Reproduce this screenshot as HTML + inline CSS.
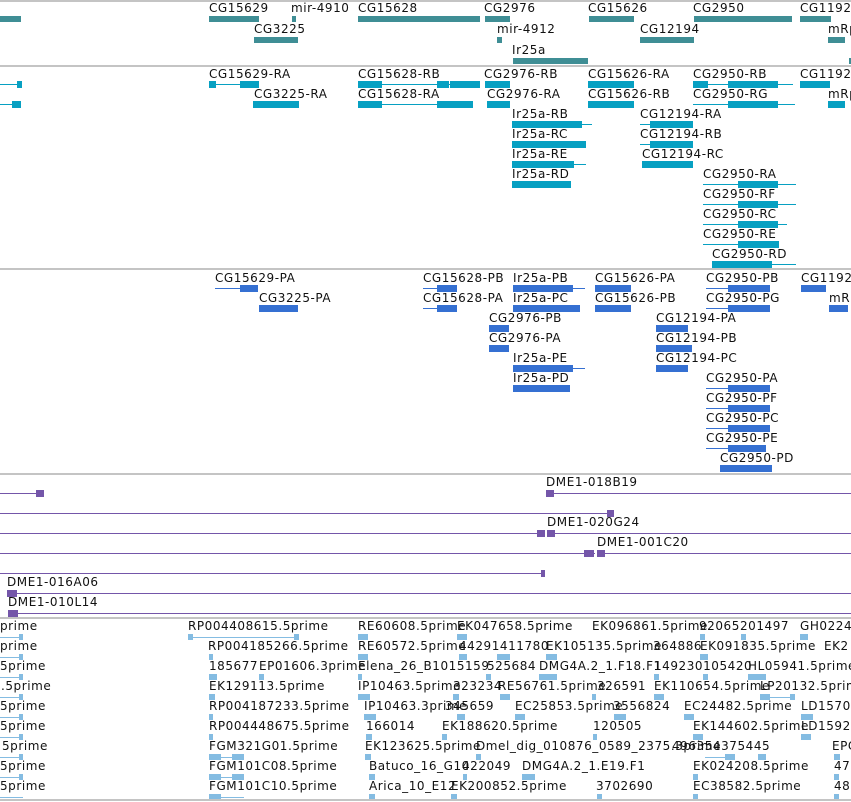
<!DOCTYPE html>
<html><head><meta charset="utf-8"><style>
html,body{margin:0;padding:0;background:#fff;width:851px;height:802px;overflow:hidden;position:relative}
.t{position:absolute;font:12px "DejaVu Sans","Liberation Sans",sans-serif;letter-spacing:0.55px;line-height:14px;white-space:nowrap;color:#111}
.s{position:absolute;left:0;width:851px;height:2px;background:#c4c4c4}
.a,.b,.c,.d,.e{position:absolute}
.a{background:#3f8e95}.b{background:#07a0c2}.c{background:#3570d2}.d{background:#7456a9}.e{background:#84bce2}
</style></head><body>
<div class="s" style="top:0px"></div>
<div class="s" style="top:65px"></div>
<div class="s" style="top:268px"></div>
<div class="s" style="top:473px"></div>
<div class="s" style="top:617px"></div>
<div class="s" style="top:799px"></div>

<!-- Track 1 genes -->
<div class="a" style="left:0;top:16px;width:21px;height:6px"></div>
<div class="t" style="left:209px;top:1px">CG15629</div><div class="a" style="left:209px;top:16px;width:50px;height:6px"></div>
<div class="t" style="left:291px;top:1px">mir-4910</div><div class="a" style="left:292px;top:16px;width:4px;height:6px"></div>
<div class="t" style="left:358px;top:1px">CG15628</div><div class="a" style="left:358px;top:16px;width:122px;height:6px"></div>
<div class="t" style="left:484px;top:1px">CG2976</div><div class="a" style="left:485px;top:16px;width:25px;height:6px"></div>
<div class="t" style="left:588px;top:1px">CG15626</div><div class="a" style="left:589px;top:16px;width:45px;height:6px"></div>
<div class="t" style="left:693px;top:1px">CG2950</div><div class="a" style="left:694px;top:16px;width:98px;height:6px"></div>
<div class="t" style="left:800px;top:1px">CG11927</div><div class="a" style="left:800px;top:16px;width:31px;height:6px"></div>
<div class="t" style="left:254px;top:22px">CG3225</div><div class="a" style="left:254px;top:37px;width:44px;height:6px"></div>
<div class="t" style="left:497px;top:22px">mir-4912</div><div class="a" style="left:497px;top:37px;width:5px;height:6px"></div>
<div class="t" style="left:640px;top:22px">CG12194</div><div class="a" style="left:640px;top:37px;width:54px;height:6px"></div>
<div class="t" style="left:828px;top:22px">mRp</div><div class="a" style="left:828px;top:37px;width:17px;height:6px"></div>
<div class="t" style="left:512px;top:43px">Ir25a</div><div class="a" style="left:513px;top:58px;width:75px;height:6px"></div>
<div class="a" style="left:849px;top:58px;width:2px;height:6px"></div>

<!-- Track 2 transcripts -->
<div class="b" style="left:0;top:84px;width:22px;height:1px"></div><div class="b" style="left:17px;top:81px;width:5px;height:7px"></div>
<div class="b" style="left:0;top:104px;width:21px;height:1px"></div><div class="b" style="left:12px;top:101px;width:9px;height:7px"></div>
<div class="t" style="left:209px;top:67px">CG15629-RA</div><div class="b" style="left:209px;top:84px;width:50px;height:1px"></div><div class="b" style="left:209px;top:81px;width:7px;height:7px"></div><div class="b" style="left:240px;top:81px;width:19px;height:7px"></div>
<div class="t" style="left:358px;top:67px">CG15628-RB</div><div class="b" style="left:358px;top:84px;width:122px;height:1px"></div><div class="b" style="left:358px;top:81px;width:24px;height:7px"></div><div class="b" style="left:437px;top:81px;width:12px;height:7px"></div><div class="b" style="left:450px;top:81px;width:30px;height:7px"></div>
<div class="t" style="left:484px;top:67px">CG2976-RB</div><div class="b" style="left:485px;top:81px;width:25px;height:7px"></div>
<div class="t" style="left:588px;top:67px">CG15626-RA</div><div class="b" style="left:588px;top:81px;width:46px;height:7px"></div>
<div class="t" style="left:693px;top:67px">CG2950-RB</div><div class="b" style="left:693px;top:84px;width:100px;height:1px"></div><div class="b" style="left:693px;top:81px;width:15px;height:7px"></div><div class="b" style="left:728px;top:81px;width:50px;height:7px"></div>
<div class="t" style="left:800px;top:67px">CG11927</div><div class="b" style="left:800px;top:81px;width:30px;height:7px"></div>
<div class="t" style="left:254px;top:87px">CG3225-RA</div><div class="b" style="left:253px;top:101px;width:46px;height:7px"></div>
<div class="t" style="left:358px;top:87px">CG15628-RA</div><div class="b" style="left:358px;top:104px;width:115px;height:1px"></div><div class="b" style="left:358px;top:101px;width:24px;height:7px"></div><div class="b" style="left:437px;top:101px;width:36px;height:7px"></div>
<div class="t" style="left:487px;top:87px">CG2976-RA</div><div class="b" style="left:487px;top:101px;width:23px;height:7px"></div>
<div class="t" style="left:588px;top:87px">CG15626-RB</div><div class="b" style="left:588px;top:101px;width:46px;height:7px"></div>
<div class="t" style="left:693px;top:87px">CG2950-RG</div><div class="b" style="left:693px;top:104px;width:102px;height:1px"></div><div class="b" style="left:728px;top:101px;width:50px;height:7px"></div>
<div class="t" style="left:828px;top:87px">mRp</div><div class="b" style="left:828px;top:101px;width:17px;height:7px"></div>
<div class="t" style="left:512px;top:107px">Ir25a-RB</div><div class="b" style="left:512px;top:124px;width:80px;height:1px"></div><div class="b" style="left:512px;top:121px;width:70px;height:7px"></div>
<div class="t" style="left:640px;top:107px">CG12194-RA</div><div class="b" style="left:640px;top:124px;width:53px;height:1px"></div><div class="b" style="left:650px;top:121px;width:43px;height:7px"></div>
<div class="t" style="left:512px;top:127px">Ir25a-RC</div><div class="b" style="left:512px;top:141px;width:74px;height:7px"></div>
<div class="t" style="left:640px;top:127px">CG12194-RB</div><div class="b" style="left:640px;top:144px;width:53px;height:1px"></div><div class="b" style="left:650px;top:141px;width:43px;height:7px"></div>
<div class="t" style="left:512px;top:147px">Ir25a-RE</div><div class="b" style="left:512px;top:164px;width:74px;height:1px"></div><div class="b" style="left:512px;top:161px;width:62px;height:7px"></div>
<div class="t" style="left:642px;top:147px">CG12194-RC</div><div class="b" style="left:642px;top:161px;width:51px;height:7px"></div>
<div class="t" style="left:512px;top:167px">Ir25a-RD</div><div class="b" style="left:512px;top:181px;width:59px;height:7px"></div>
<div class="t" style="left:703px;top:167px">CG2950-RA</div><div class="b" style="left:703px;top:184px;width:93px;height:1px"></div><div class="b" style="left:738px;top:181px;width:40px;height:7px"></div>
<div class="t" style="left:703px;top:187px">CG2950-RF</div><div class="b" style="left:703px;top:204px;width:93px;height:1px"></div><div class="b" style="left:738px;top:201px;width:40px;height:7px"></div>
<div class="t" style="left:703px;top:207px">CG2950-RC</div><div class="b" style="left:703px;top:224px;width:84px;height:1px"></div><div class="b" style="left:738px;top:221px;width:40px;height:7px"></div>
<div class="t" style="left:703px;top:227px">CG2950-RE</div><div class="b" style="left:703px;top:244px;width:76px;height:1px"></div><div class="b" style="left:738px;top:241px;width:41px;height:7px"></div>
<div class="t" style="left:712px;top:247px">CG2950-RD</div><div class="b" style="left:712px;top:264px;width:84px;height:1px"></div><div class="b" style="left:712px;top:261px;width:60px;height:7px"></div>

<!-- Track 3 proteins -->
<div class="t" style="left:215px;top:271px">CG15629-PA</div><div class="c" style="left:215px;top:288px;width:43px;height:1px"></div><div class="c" style="left:240px;top:285px;width:18px;height:7px"></div>
<div class="t" style="left:423px;top:271px">CG15628-PB</div><div class="c" style="left:423px;top:288px;width:34px;height:1px"></div><div class="c" style="left:437px;top:285px;width:20px;height:7px"></div>
<div class="t" style="left:513px;top:271px">Ir25a-PB</div><div class="c" style="left:513px;top:288px;width:72px;height:1px"></div><div class="c" style="left:513px;top:285px;width:60px;height:7px"></div>
<div class="t" style="left:595px;top:271px">CG15626-PA</div><div class="c" style="left:595px;top:285px;width:36px;height:7px"></div>
<div class="t" style="left:706px;top:271px">CG2950-PB</div><div class="c" style="left:706px;top:288px;width:64px;height:1px"></div><div class="c" style="left:728px;top:285px;width:42px;height:7px"></div>
<div class="t" style="left:801px;top:271px">CG1192</div><div class="c" style="left:801px;top:285px;width:25px;height:7px"></div>
<div class="t" style="left:259px;top:291px">CG3225-PA</div><div class="c" style="left:259px;top:305px;width:39px;height:7px"></div>
<div class="t" style="left:423px;top:291px">CG15628-PA</div><div class="c" style="left:423px;top:308px;width:34px;height:1px"></div><div class="c" style="left:437px;top:305px;width:20px;height:7px"></div>
<div class="t" style="left:513px;top:291px">Ir25a-PC</div><div class="c" style="left:513px;top:305px;width:67px;height:7px"></div>
<div class="t" style="left:595px;top:291px">CG15626-PB</div><div class="c" style="left:595px;top:305px;width:36px;height:7px"></div>
<div class="t" style="left:706px;top:291px">CG2950-PG</div><div class="c" style="left:706px;top:308px;width:64px;height:1px"></div><div class="c" style="left:728px;top:305px;width:42px;height:7px"></div>
<div class="t" style="left:829px;top:291px">mRp</div><div class="c" style="left:829px;top:305px;width:19px;height:7px"></div>
<div class="t" style="left:489px;top:311px">CG2976-PB</div><div class="c" style="left:489px;top:325px;width:20px;height:7px"></div>
<div class="t" style="left:656px;top:311px">CG12194-PA</div><div class="c" style="left:656px;top:325px;width:32px;height:7px"></div>
<div class="t" style="left:489px;top:331px">CG2976-PA</div><div class="c" style="left:489px;top:345px;width:20px;height:7px"></div>
<div class="t" style="left:656px;top:331px">CG12194-PB</div><div class="c" style="left:656px;top:345px;width:36px;height:7px"></div>
<div class="t" style="left:513px;top:351px">Ir25a-PE</div><div class="c" style="left:513px;top:368px;width:72px;height:1px"></div><div class="c" style="left:513px;top:365px;width:60px;height:7px"></div>
<div class="t" style="left:656px;top:351px">CG12194-PC</div><div class="c" style="left:656px;top:365px;width:32px;height:7px"></div>
<div class="t" style="left:513px;top:371px">Ir25a-PD</div><div class="c" style="left:513px;top:385px;width:57px;height:7px"></div>
<div class="t" style="left:706px;top:371px">CG2950-PA</div><div class="c" style="left:706px;top:388px;width:64px;height:1px"></div><div class="c" style="left:728px;top:385px;width:42px;height:7px"></div>
<div class="t" style="left:706px;top:391px">CG2950-PF</div><div class="c" style="left:706px;top:408px;width:64px;height:1px"></div><div class="c" style="left:728px;top:405px;width:42px;height:7px"></div>
<div class="t" style="left:706px;top:411px">CG2950-PC</div><div class="c" style="left:706px;top:428px;width:64px;height:1px"></div><div class="c" style="left:728px;top:425px;width:42px;height:7px"></div>
<div class="t" style="left:706px;top:431px">CG2950-PE</div><div class="c" style="left:706px;top:448px;width:60px;height:1px"></div><div class="c" style="left:728px;top:445px;width:38px;height:7px"></div>
<div class="t" style="left:720px;top:451px">CG2950-PD</div><div class="c" style="left:720px;top:465px;width:52px;height:7px"></div>

<!-- Track 4 clones -->
<div class="d" style="left:0;top:493px;width:44px;height:1px"></div><div class="d" style="left:36px;top:490px;width:8px;height:7px"></div>
<div class="t" style="left:546px;top:475px">DME1-018B19</div><div class="d" style="left:546px;top:493px;width:305px;height:1px"></div><div class="d" style="left:546px;top:490px;width:8px;height:7px"></div>
<div class="d" style="left:0;top:513px;width:614px;height:1px"></div><div class="d" style="left:607px;top:510px;width:7px;height:7px"></div>
<div class="d" style="left:0;top:533px;width:545px;height:1px"></div><div class="d" style="left:537px;top:530px;width:8px;height:7px"></div>
<div class="t" style="left:547px;top:515px">DME1-020G24</div><div class="d" style="left:547px;top:533px;width:304px;height:1px"></div><div class="d" style="left:547px;top:530px;width:8px;height:7px"></div>
<div class="d" style="left:0;top:553px;width:595px;height:1px"></div><div class="d" style="left:584px;top:550px;width:10px;height:7px"></div>
<div class="t" style="left:597px;top:535px">DME1-001C20</div><div class="d" style="left:597px;top:553px;width:254px;height:1px"></div><div class="d" style="left:597px;top:550px;width:8px;height:7px"></div>
<div class="d" style="left:0;top:573px;width:545px;height:1px"></div><div class="d" style="left:541px;top:570px;width:4px;height:7px"></div>
<div class="t" style="left:7px;top:575px">DME1-016A06</div><div class="d" style="left:7px;top:593px;width:844px;height:1px"></div><div class="d" style="left:7px;top:590px;width:10px;height:7px"></div>
<div class="t" style="left:8px;top:595px">DME1-010L14</div><div class="d" style="left:8px;top:613px;width:843px;height:1px"></div><div class="d" style="left:8px;top:610px;width:10px;height:7px"></div>

<!-- Track 5 ESTs -->
<div class="t" style="left:0;top:619px">prime</div>
<div class="t" style="left:188px;top:619px">RP004408615.5prime</div>
<div class="t" style="left:358px;top:619px">RE60608.5prime</div>
<div class="t" style="left:457px;top:619px">EK047658.5prime</div>
<div class="t" style="left:592px;top:619px">EK096861.5prime</div>
<div class="t" style="left:699px;top:619px">92065</div>
<div class="t" style="left:740px;top:619px">201497</div>
<div class="t" style="left:800px;top:619px">GH0224</div>

<div class="t" style="left:0;top:639px">prime</div>
<div class="t" style="left:208px;top:639px">RP004185266.5prime</div>
<div class="t" style="left:358px;top:639px">RE60572.5prime</div>
<div class="t" style="left:459px;top:639px">44291411780</div>
<div class="t" style="left:546px;top:639px">EK105135.5prime</div>
<div class="t" style="left:653px;top:639px">364886</div>
<div class="t" style="left:700px;top:639px">EK091835.5prime</div>
<div class="t" style="left:824px;top:639px">EK2</div>

<div class="t" style="left:0;top:659px">5prime</div>
<div class="t" style="left:209px;top:659px">185677</div>
<div class="t" style="left:259px;top:659px">EP01606.3prime</div>
<div class="t" style="left:358px;top:659px">Elena_26_B1015159</div>
<div class="t" style="left:487px;top:659px">525684</div>
<div class="t" style="left:539px;top:659px">DMG4A.2_1.F18.F1</div>
<div class="t" style="left:654px;top:659px">149230105420</div>
<div class="t" style="left:748px;top:659px">HL05941.5prime</div>

<div class="t" style="left:1px;top:679px">.5prime</div>
<div class="t" style="left:209px;top:679px">EK129113.5prime</div>
<div class="t" style="left:358px;top:679px">IP10463.5prime</div>
<div class="t" style="left:453px;top:679px">323234</div>
<div class="t" style="left:498px;top:679px">RE56761.5prime</div>
<div class="t" style="left:597px;top:679px">326591</div>
<div class="t" style="left:654px;top:679px">EK110654.5prime</div>
<div class="t" style="left:760px;top:679px">LP20132.5prime</div>

<div class="t" style="left:0;top:699px">5prime</div>
<div class="t" style="left:209px;top:699px">RP004187233.5prime</div>
<div class="t" style="left:364px;top:699px">IP10463.3prime</div>
<div class="t" style="left:445px;top:699px">345659</div>
<div class="t" style="left:515px;top:699px">EC25853.5prime</div>
<div class="t" style="left:613px;top:699px">3556824</div>
<div class="t" style="left:684px;top:699px">EC24482.5prime</div>
<div class="t" style="left:801px;top:699px">LD15709</div>

<div class="t" style="left:0;top:719px">5prime</div>
<div class="t" style="left:209px;top:719px">RP004448675.5prime</div>
<div class="t" style="left:366px;top:719px">166014</div>
<div class="t" style="left:442px;top:719px">EK188620.5prime</div>
<div class="t" style="left:593px;top:719px">120505</div>
<div class="t" style="left:693px;top:719px">EK144602.5prime</div>
<div class="t" style="left:801px;top:719px">LD1592</div>

<div class="t" style="left:2px;top:739px">5prime</div>
<div class="t" style="left:209px;top:739px">FGM321G01.5prime</div>
<div class="t" style="left:365px;top:739px">EK123625.5prime</div>
<div class="t" style="left:476px;top:739px">Dmel_dig_010876_0589_2375.3prime</div>
<div class="t" style="left:672px;top:739px">496354375445</div>
<div class="t" style="left:832px;top:739px">EPC</div>

<div class="t" style="left:0;top:759px">5prime</div>
<div class="t" style="left:209px;top:759px">FGM101C08.5prime</div>
<div class="t" style="left:369px;top:759px">Batuco_16_G10</div>
<div class="t" style="left:462px;top:759px">422049</div>
<div class="t" style="left:522px;top:759px">DMG4A.2_1.E19.F1</div>
<div class="t" style="left:693px;top:759px">EK024208.5prime</div>
<div class="t" style="left:834px;top:759px">475</div>

<div class="t" style="left:0;top:779px">5prime</div>
<div class="t" style="left:209px;top:779px">FGM101C10.5prime</div>
<div class="t" style="left:369px;top:779px">Arica_10_E12</div>
<div class="t" style="left:451px;top:779px">EK200852.5prime</div>
<div class="t" style="left:596px;top:779px">3702690</div>
<div class="t" style="left:693px;top:779px">EC38582.5prime</div>
<div class="t" style="left:834px;top:779px">482</div>

<!-- EST glyphs -->
<div class="e" style="left:0;top:637px;width:23px;height:1px"></div><div class="e" style="left:19px;top:634px;width:4px;height:6px"></div>
<div class="e" style="left:0;top:657px;width:23px;height:1px"></div><div class="e" style="left:19px;top:654px;width:4px;height:6px"></div>
<div class="e" style="left:0;top:677px;width:23px;height:1px"></div><div class="e" style="left:19px;top:674px;width:4px;height:6px"></div>
<div class="e" style="left:0;top:697px;width:23px;height:1px"></div><div class="e" style="left:19px;top:694px;width:4px;height:6px"></div>
<div class="e" style="left:0;top:717px;width:23px;height:1px"></div><div class="e" style="left:19px;top:714px;width:4px;height:6px"></div>
<div class="e" style="left:0;top:737px;width:23px;height:1px"></div><div class="e" style="left:19px;top:734px;width:4px;height:6px"></div>
<div class="e" style="left:0;top:757px;width:23px;height:1px"></div><div class="e" style="left:19px;top:754px;width:4px;height:6px"></div>
<div class="e" style="left:0;top:777px;width:23px;height:1px"></div><div class="e" style="left:19px;top:774px;width:4px;height:6px"></div>
<div class="e" style="left:0;top:797px;width:23px;height:1px"></div>
<div class="e" style="left:188px;top:637px;width:111px;height:1px"></div><div class="e" style="left:188px;top:634px;width:5px;height:6px"></div><div class="e" style="left:294px;top:634px;width:5px;height:6px"></div>
<div class="e" style="left:209px;top:654px;width:4px;height:6px"></div>
<div class="e" style="left:209px;top:674px;width:8px;height:6px"></div><div class="e" style="left:259px;top:674px;width:5px;height:6px"></div>
<div class="e" style="left:209px;top:694px;width:6px;height:6px"></div>
<div class="e" style="left:209px;top:714px;width:4px;height:6px"></div>
<div class="e" style="left:209px;top:734px;width:4px;height:6px"></div>
<div class="e" style="left:209px;top:757px;width:35px;height:1px"></div><div class="e" style="left:209px;top:754px;width:12px;height:6px"></div><div class="e" style="left:232px;top:754px;width:12px;height:6px"></div>
<div class="e" style="left:209px;top:777px;width:35px;height:1px"></div><div class="e" style="left:209px;top:774px;width:12px;height:6px"></div><div class="e" style="left:232px;top:774px;width:12px;height:6px"></div>
<div class="e" style="left:209px;top:797px;width:35px;height:1px"></div><div class="e" style="left:209px;top:794px;width:12px;height:5px"></div>
<div class="e" style="left:358px;top:634px;width:10px;height:6px"></div>
<div class="e" style="left:358px;top:654px;width:10px;height:6px"></div>
<div class="e" style="left:358px;top:674px;width:4px;height:6px"></div>
<div class="e" style="left:358px;top:694px;width:12px;height:6px"></div>
<div class="e" style="left:364px;top:714px;width:12px;height:6px"></div>
<div class="e" style="left:366px;top:734px;width:6px;height:6px"></div>
<div class="e" style="left:365px;top:754px;width:6px;height:6px"></div>
<div class="e" style="left:369px;top:774px;width:6px;height:6px"></div>
<div class="e" style="left:369px;top:794px;width:6px;height:5px"></div>
<div class="e" style="left:457px;top:634px;width:10px;height:6px"></div>
<div class="e" style="left:459px;top:654px;width:8px;height:6px"></div><div class="e" style="left:497px;top:654px;width:13px;height:6px"></div><div class="e" style="left:546px;top:654px;width:11px;height:6px"></div>
<div class="e" style="left:486px;top:674px;width:5px;height:6px"></div><div class="e" style="left:539px;top:674px;width:18px;height:6px"></div>
<div class="e" style="left:453px;top:694px;width:6px;height:6px"></div><div class="e" style="left:500px;top:694px;width:10px;height:6px"></div>
<div class="e" style="left:457px;top:714px;width:8px;height:6px"></div><div class="e" style="left:515px;top:714px;width:10px;height:6px"></div>
<div class="e" style="left:442px;top:734px;width:5px;height:6px"></div>
<div class="e" style="left:476px;top:754px;width:5px;height:6px"></div>
<div class="e" style="left:463px;top:774px;width:4px;height:6px"></div><div class="e" style="left:522px;top:774px;width:13px;height:6px"></div>
<div class="e" style="left:451px;top:794px;width:6px;height:5px"></div>
<div class="e" style="left:592px;top:694px;width:4px;height:6px"></div><div class="e" style="left:614px;top:714px;width:12px;height:6px"></div>
<div class="e" style="left:593px;top:734px;width:4px;height:6px"></div><div class="e" style="left:597px;top:794px;width:5px;height:5px"></div>
<div class="e" style="left:700px;top:634px;width:5px;height:6px"></div><div class="e" style="left:741px;top:634px;width:5px;height:6px"></div><div class="e" style="left:800px;top:634px;width:8px;height:6px"></div>
<div class="e" style="left:700px;top:654px;width:8px;height:6px"></div>
<div class="e" style="left:654px;top:674px;width:5px;height:6px"></div><div class="e" style="left:703px;top:674px;width:5px;height:6px"></div><div class="e" style="left:748px;top:674px;width:18px;height:6px"></div>
<div class="e" style="left:654px;top:694px;width:10px;height:6px"></div><div class="e" style="left:760px;top:697px;width:35px;height:1px"></div><div class="e" style="left:760px;top:694px;width:10px;height:6px"></div><div class="e" style="left:790px;top:694px;width:5px;height:6px"></div>
<div class="e" style="left:684px;top:714px;width:10px;height:6px"></div><div class="e" style="left:801px;top:714px;width:12px;height:6px"></div>
<div class="e" style="left:693px;top:734px;width:10px;height:6px"></div><div class="e" style="left:801px;top:734px;width:10px;height:6px"></div>
<div class="e" style="left:705px;top:757px;width:30px;height:1px"></div><div class="e" style="left:725px;top:754px;width:10px;height:6px"></div><div class="e" style="left:758px;top:754px;width:8px;height:6px"></div><div class="e" style="left:834px;top:754px;width:6px;height:6px"></div>
<div class="e" style="left:693px;top:774px;width:5px;height:6px"></div><div class="e" style="left:834px;top:774px;width:5px;height:6px"></div>
<div class="e" style="left:693px;top:794px;width:5px;height:5px"></div><div class="e" style="left:834px;top:794px;width:5px;height:5px"></div>
</body></html>
